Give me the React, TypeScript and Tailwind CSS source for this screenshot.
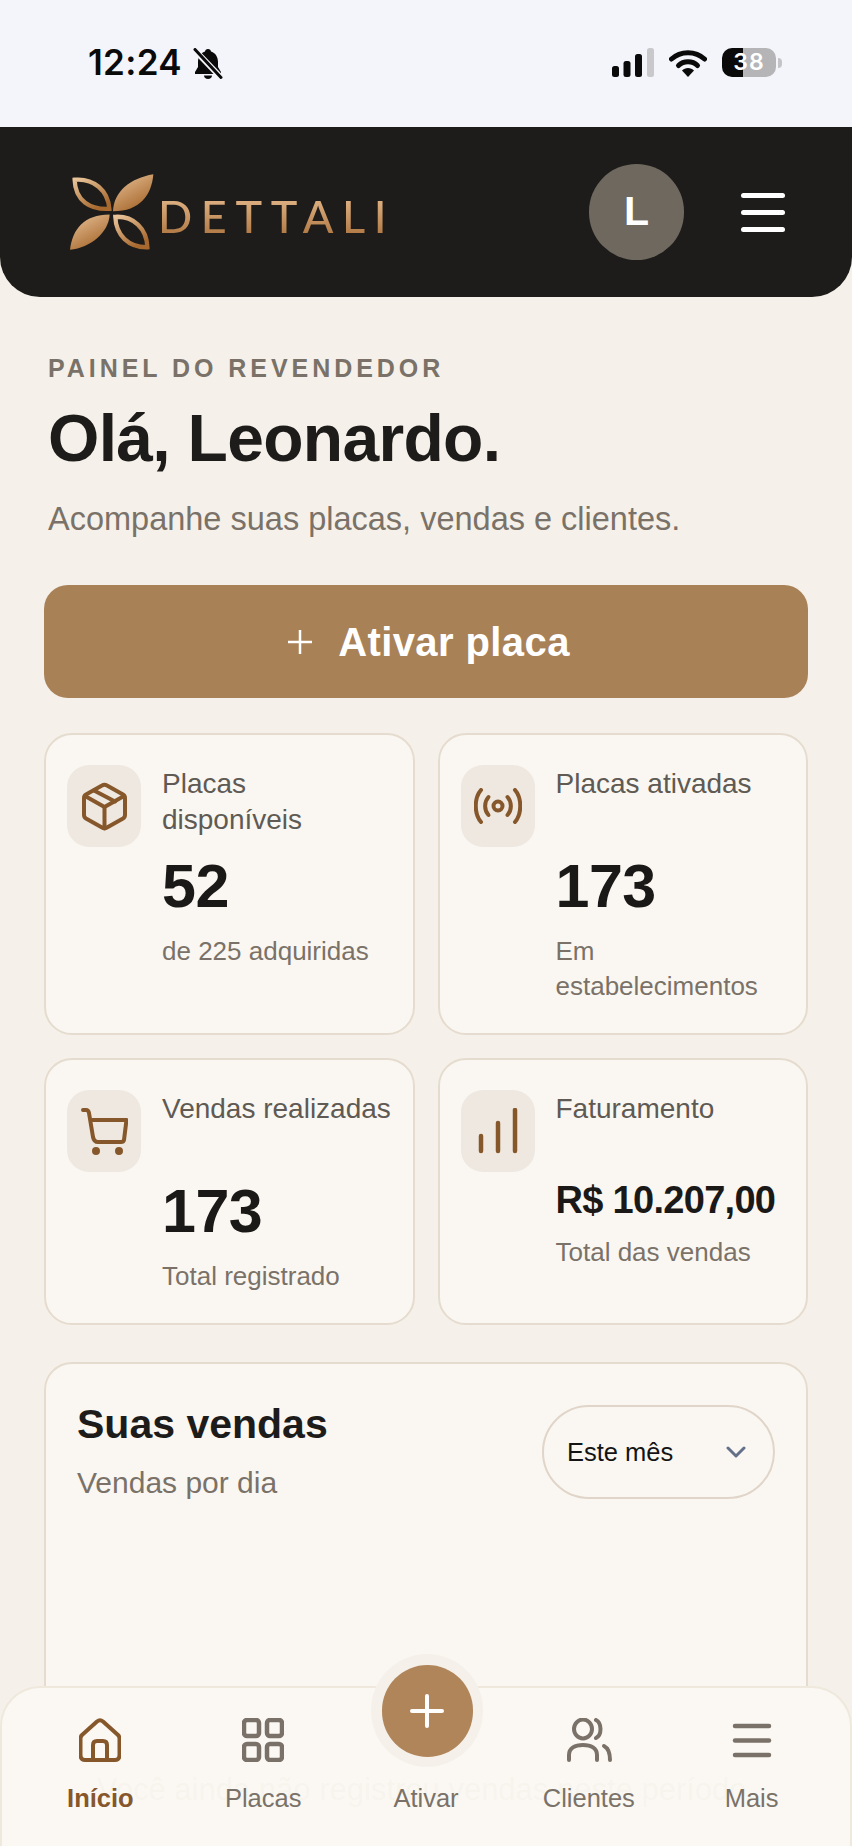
import React from "react";

const brown = "#86572a";
const gray = "#7a7268";

function Bell() {
  return (
    <svg width="32" height="32" viewBox="0 0 32 32" className="ml-[10px]">
      <path d="M16 1c1.800 0 2.800 1 3 2.400C24 5 26 9.400 26 14v5l3 5v2H3v-2l3-5v-5c0-4.600 2-9 7-10.600C13.200 2 14.200 1 16 1z" fill="#0a0a0a" />
      <path d="M12 27.500h8c0 2.200-1.800 3.500-4 3.500s-4-1.300-4-3.500z" fill="#0a0a0a" />
      <path d="M4.500 4l25 26" stroke="#f3f5fa" strokeWidth="6" />
      <path d="M3 1.500l26 28" stroke="#0a0a0a" strokeWidth="3" strokeLinecap="round" />
    </svg>
  );
}

function Signal() {
  return (
    <svg width="42" height="29" viewBox="0 0 42 29">
      <rect x="0" y="18" width="7" height="11" rx="2.500" fill="#0a0a0a" />
      <rect x="11.500" y="13" width="7" height="16" rx="2.500" fill="#0a0a0a" />
      <rect x="23" y="6" width="7" height="23" rx="2.500" fill="#0a0a0a" />
      <rect x="35" y="0" width="7" height="29" rx="2.500" fill="#c9c9cc" />
    </svg>
  );
}

function Wifi() {
  return (
    <svg width="38" height="28" viewBox="0 0 38 28">
      <path d="M2.500 10C11.500 1.500 26.500 1.500 35.500 10" fill="none" stroke="#0a0a0a" strokeWidth="5" strokeLinecap="round" />
      <path d="M9.500 16.500C14.500 11.500 23.500 11.500 28.500 16.500" fill="none" stroke="#0a0a0a" strokeWidth="5" strokeLinecap="round" />
      <path d="M13 21.500c3-3.500 9-3.500 12 0L19 28z" fill="#0a0a0a" />
    </svg>
  );
}

function Logo() {
  return (
    <svg width="86" height="78" viewBox="85 75 260 235">
      <defs>
        <linearGradient id="gold" x1="0" y1="0" x2="0.6" y2="1">
          <stop offset="0" stopColor="#e9c49a" />
          <stop offset="1" stopColor="#a8692f" />
        </linearGradient>
      </defs>
      <path d="M218 190C220 130 270 90 340 78C335 140 300 190 218 190Z" fill="url(#gold)" />
      <path d="M208 200C205 255 150 300 88 307C95 245 130 200 208 200Z" fill="url(#gold)" />
      <path d="M102 95C160 90 203 127 207 183C150 186 104 160 102 95Z" fill="none" stroke="url(#gold)" strokeWidth="13" />
      <path d="M322 299C265 300 227 263 225 207C280 204 320 242 322 299Z" fill="none" stroke="url(#gold)" strokeWidth="13" />
    </svg>
  );
}

const iconLine = { fill: "none", stroke: brown, strokeLinecap: "round", strokeLinejoin: "round" } as const;

function BoxIcon() {
  return (
    <svg width="45" height="49" viewBox="0 0 45 49" {...iconLine} strokeWidth="4">
      <path d="M20 3.500Q22.500 2 25 3.500L41 12.500Q43 13.700 43 16V33Q43 35.300 41 36.500L25 45.500Q22.500 47 20 45.500L4 36.500Q2 35.300 2 33V16Q2 13.700 4 12.500Z" />
      <path d="M3 14L22.500 25L42 14" />
      <path d="M22.500 25V46.500" />
      <path d="M12 8.500L33 19.500" />
    </svg>
  );
}

function RadioIcon() {
  return (
    <svg width="48" height="36" viewBox="0 0 48 36" {...iconLine} strokeWidth="4">
      <circle cx="24" cy="18" r="4.500" />
      <path d="M14.500 9C10 14 10 22 14.500 27" />
      <path d="M33.500 9C38 14 38 22 33.500 27" />
      <path d="M7 2C0 10 0 26 7 34" />
      <path d="M41 2C48 10 48 26 41 34" />
    </svg>
  );
}

function CartIcon() {
  return (
    <svg width="47" height="48" viewBox="0 0 47 48" {...iconLine} strokeWidth="4">
      <path d="M2 3H5Q7.500 3 8 6L12 30Q13 35 17 35H40Q42.500 35 43 33L45.500 13H9.500" />
      <circle cx="15" cy="44" r="2.500" fill={brown} stroke={brown} strokeWidth="3" />
      <circle cx="38" cy="44" r="2.500" fill={brown} stroke={brown} strokeWidth="3" />
    </svg>
  );
}

function BarsIcon() {
  return (
    <svg width="40" height="46" viewBox="0 0 40 46" {...iconLine} strokeWidth="4.500">
      <path d="M3 43V28" />
      <path d="M20 43V15" />
      <path d="M37 43V2" />
    </svg>
  );
}

function HomeIcon() {
  return (
    <svg width="42" height="44" viewBox="0 0 42 44" fill="none" stroke={brown} strokeWidth="4" strokeLinejoin="round">
      <path d="M3 17L18 3.500Q21 1 24 3.500L39 17Q40.500 18.500 40.500 20.500V37Q40.500 42 36 42H6Q1.500 42 1.500 37V20.500Q1.500 18.500 3 17Z" />
      <path d="M14 42V27Q14 23 18 23H24Q28 23 28 27V42" />
    </svg>
  );
}

function GridIcon() {
  return (
    <svg width="42" height="44" viewBox="0 0 42 44" fill="none" stroke={gray} strokeWidth="4.500">
      <rect x="2" y="2" width="15" height="16" rx="3" />
      <rect x="25" y="2" width="15" height="16" rx="3" />
      <rect x="2" y="26" width="15" height="16" rx="3" />
      <rect x="25" y="26" width="15" height="16" rx="3" />
    </svg>
  );
}

function UsersIcon() {
  return (
    <svg width="46" height="44" viewBox="0 0 46 44" fill="none" stroke={gray} strokeWidth="4" strokeLinecap="round">
      <ellipse cx="17" cy="11" rx="9" ry="9.500" />
      <path d="M30 2C36 5 36 17 30 20" />
      <path d="M3 42V37C3 30 9 27 17 27C25 27 31 30 31 37V42" />
      <path d="M38 28C42 30 44 34 44 42" />
    </svg>
  );
}

function MenuIcon() {
  return (
    <svg width="40" height="44" viewBox="0 0 40 44" fill="none" stroke={gray} strokeWidth="4.500" strokeLinecap="round">
      <path d="M3 8H37" />
      <path d="M3 22.500H37" />
      <path d="M3 37H37" />
    </svg>
  );
}

function StatCard({ icon, label, value, sub, small }: { icon: React.ReactNode; label: string; value: string; sub: string; small?: boolean }) {
  return (
    <div className="flex gap-[21px] rounded-[28px] border-2 border-[#e5dccf] bg-[#faf7f2] pt-[30px] pr-[19px] pb-[29px] pl-[21px]">
      <div className="flex h-[82px] w-[74px] shrink-0 items-center justify-center rounded-[22px] bg-[#eee8e0]">{icon}</div>
      <div className="min-w-0 flex-1 pt-px">
        <div className="min-h-[72px] text-[28px] leading-[36px] text-[#5f5a53]">{label}</div>
        {small ? (
          <div className="mt-[15px] text-[38px] leading-[44px] font-bold tracking-[-0.7px] whitespace-nowrap text-[#1a1917]">{value}</div>
        ) : (
          <div className="mt-[18px] text-[61px] leading-[60px] font-bold tracking-[-0.5px] text-[#1a1917]">{value}</div>
        )}
        <div className={`${small ? "mt-[13px]" : "mt-[18px]"} text-[26px] leading-[35px] text-[#7a7268]`}>{sub}</div>
      </div>
    </div>
  );
}

function NavItem({ icon, label, active }: { icon?: React.ReactNode; label: string; active?: boolean }) {
  return (
    <div className="flex flex-col items-center">
      <div className="flex h-[44px] items-center justify-center">{icon}</div>
      <div className={`mt-[21px] text-[25.500px] leading-[30px] ${active ? "font-bold text-[#86572a]" : "text-[#7a7268]"}`}>{label}</div>
    </div>
  );
}

export default function App() {
  return (
    <div className="relative h-[1846px] w-[852px] overflow-hidden bg-[#f5f1ea] font-['Liberation_Sans',Arial,sans-serif]">
      <div className="flex h-[127px] items-start justify-between bg-[#f3f5fa] pt-[47px] pr-[70px] pl-[88px]">
        <div className="flex items-center">
          <span className="-mt-[3px] font-['Inter',sans-serif] text-[35px] leading-[36px] font-semibold tracking-[0.3px] text-[#0a0a0a]">12:24</span>
          <Bell />
        </div>
        <div className="flex items-center gap-[15px] pt-[1px]">
          <Signal />
          <Wifi />
          <div className="flex items-center gap-[2px]">
            <div className="flex h-[29px] w-[54px] items-center justify-center rounded-[10px] bg-[linear-gradient(90deg,#0a0a0a_0,#0a0a0a_39%,#b5b5b8_39%,#b5b5b8_100%)] font-['Inter',sans-serif] text-[23px] font-semibold tracking-[1px] text-white">38</div>
            <div className="h-[10px] w-[4px] rounded-r-full bg-[#c4c4c7]" />
          </div>
        </div>
      </div>

      <header className="flex h-[170px] items-center justify-between rounded-b-[40px] bg-[#1d1c1a] pr-[67px] pl-[69px]">
        <div className="flex items-center gap-[3px]">
          <Logo />
          <span className="mt-[7px] bg-[linear-gradient(180deg,#e8bd90,#a9703a)] bg-clip-text font-['Lato',sans-serif] text-[45px] leading-[50px] font-medium tracking-[8.600px] text-transparent">DETTALI</span>
        </div>
        <div className="flex items-center gap-[57px]">
          <div className="flex h-[96px] w-[95px] items-center justify-center rounded-full bg-[#6f685f] text-[41px] font-bold text-white">L</div>
          <div className="flex w-[44px] flex-col gap-[12px]">
            <div className="h-[5px] rounded-full bg-white" />
            <div className="h-[5px] rounded-full bg-white" />
            <div className="h-[5px] rounded-full bg-white" />
          </div>
        </div>
      </header>

      <main className="px-[44px] pt-[56px]">
        <div className="pl-[4px] text-[25px] leading-[30px] font-bold tracking-[3.950px] text-[#7a7268]">PAINEL DO REVENDEDOR</div>
        <h1 className="mt-[19px] pl-[4px] text-[66px] leading-[72px] font-bold tracking-[-0.7px] text-[#1d1c1a]">Olá, Leonardo.</h1>
        <p className="mt-[25px] pl-[4px] text-[32.500px] leading-[40px] text-[#7a7268]">Acompanhe suas placas, vendas e clientes.</p>

        <button className="mt-[46px] flex h-[113px] w-full items-center justify-center gap-[26px] rounded-[24px] bg-[#a98157] pl-[6px] text-white">
          <svg width="24" height="24" viewBox="0 0 24 24" fill="none" stroke="white" strokeWidth="2.500">
            <path d="M12 0V24" />
            <path d="M0 12H24" />
          </svg>
          <span className="text-[40px] leading-[48px] font-bold tracking-[0.4px]">Ativar placa</span>
        </button>

        <div className="mt-[35px] grid grid-cols-2 gap-[23px]">
          <StatCard icon={<BoxIcon />} label="Placas disponíveis" value="52" sub="de 225 adquiridas" />
          <StatCard icon={<RadioIcon />} label="Placas ativadas" value="173" sub="Em estabelecimentos" />
          <StatCard icon={<CartIcon />} label="Vendas realizadas" value="173" sub="Total registrado" />
          <StatCard icon={<BarsIcon />} label="Faturamento" value="R$ 10.207,00" sub="Total das vendas" small />
        </div>

        <section className="mt-[37px] h-[560px] rounded-[28px] border-2 border-[#e5dccf] bg-[#faf7f2] pr-[31px] pl-[31px]">
          <div className="flex items-start justify-between">
            <div className="pt-[37px]">
              <h2 className="text-[41px] leading-[46px] font-bold text-[#1d1c1a]">Suas vendas</h2>
              <p className="mt-[18px] text-[30px] leading-[36px] text-[#7a7268]">Vendas por dia</p>
            </div>
            <div className="mt-[41px] flex h-[94px] w-[233px] items-center justify-between rounded-full border-2 border-[#e0d5c8] pr-[27px] pl-[23px]">
              <span className="text-[25.500px] text-[#141414]">Este mês</span>
              <svg width="20" height="12" viewBox="0 0 20 12" fill="none" stroke="#64708a" strokeWidth="3" strokeLinecap="round" strokeLinejoin="round">
                <path d="M2 2L10 10L18 2" />
              </svg>
            </div>
          </div>
          <p className="mt-[271px] text-center text-[31px] leading-[36px] whitespace-nowrap text-[#7a7268]">Você ainda não registrou vendas neste período.</p>
        </section>
      </main>

      <nav className="absolute inset-x-0 top-[1686px] bottom-0 grid grid-cols-5 rounded-t-[40px] border-x-2 border-t-2 border-[#efe8dd] bg-[#fbf8f3]/[0.97] px-[17px] pt-[30px]">
        <NavItem icon={<HomeIcon />} label="Início" active />
        <NavItem icon={<GridIcon />} label="Placas" />
        <NavItem label="Ativar" />
        <NavItem icon={<UsersIcon />} label="Clientes" />
        <NavItem icon={<MenuIcon />} label="Mais" />
        <div className="absolute top-[-34px] left-[369px] flex h-[113px] w-[112px] items-center justify-center rounded-full bg-[#f5f1ea]">
          <div className="flex h-[92px] w-[91px] items-center justify-center rounded-full bg-[#b0855a]">
            <svg width="34" height="34" viewBox="0 0 34 34" fill="none" stroke="white" strokeWidth="4" strokeLinecap="round">
              <path d="M17 2V32" />
              <path d="M2 17H32" />
            </svg>
          </div>
        </div>
      </nav>
    </div>
  );
}
